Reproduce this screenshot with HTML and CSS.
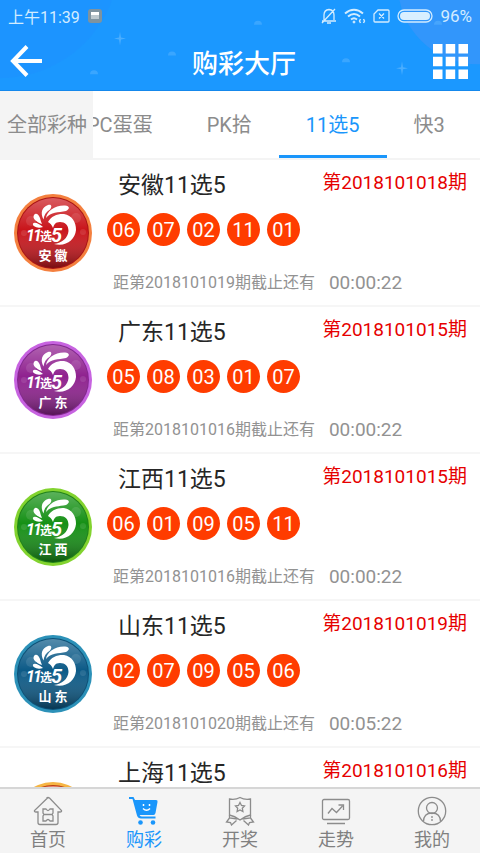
FILE: index.html
```html
<!DOCTYPE html>
<html lang="zh-CN">
<head>
    <meta charset="UTF-8">
    <meta name="viewport" content="width=device-width, initial-scale=1.0">
    <title>购彩大厅</title>
    <link rel="stylesheet" href="styles.css">
</head>
<body>
    <!-- shared badge artwork -->
    <svg class="defs" width="0" height="0" aria-hidden="true">
        <defs>
            <linearGradient id="shade" x1="0" y1="0" x2="0" y2="1">
                <stop offset="0" stop-color="#fff" stop-opacity=".3"/>
                <stop offset=".45" stop-color="#fff" stop-opacity="0"/>
                <stop offset="1" stop-color="#000" stop-opacity=".4"/>
            </linearGradient>
            <symbol id="badge" viewBox="0 0 78 78">
                <circle class="badge-ring" cx="39" cy="39" r="39"/>
                <circle class="badge-edge" cx="39" cy="39" r="36"/>
                <circle class="badge-face" cx="39" cy="39" r="35"/>
                <circle cx="39" cy="39" r="35" fill="url(#shade)"/>
                <g fill="#fff" opacity=".1">
                    <circle cx="17" cy="27" r="5"/>
                    <circle cx="62" cy="24" r="5"/>
                    <circle cx="10" cy="39" r="3"/>
                    <circle cx="69" cy="38" r="3"/>
                </g>
                <g fill="#fff">
                    <path d="M32 24C33 17 41 11 51 11.500C56 12 56 15 52 17C44 18.500 37 18 32 24Z"/>
                    <path d="M29.500 25.500C26 19 28 13 34 11C38 10 38 13 36 15.500C32 18 30 21 29.500 25.500Z"/>
                    <path d="M28 30C22 28 18 24 20 21C22 18 25 21 26 24C26.500 26 27 28 28 30Z"/>
                    <path d="M29 33C23 35 18 32 19 29.500C21 27.500 25 30 29 33Z"/>
                    <path d="M34 28C37 22 44 19.500 50 20C58 21.500 62 28 62 36C61 46 52 53 40 50C48 49 54 44 54.500 37C54.500 31 51 28 46 28C41 28 40 31 39 34C38 31 36 29 34 28Z"/>
                </g>
                <text class="badge-num" x="12 19" y="47">11</text>
                <text class="badge-pick" x="26" y="47">选</text>
                <text class="badge-five" x="37" y="48">5</text>
            </symbol>
        </defs>
    </svg>

    <div class="app">
        <header class="header">
            <svg class="header-decor" viewBox="0 0 480 91" preserveAspectRatio="none" aria-hidden="true">
                <circle cx="0" cy="-40" r="119" fill="#1e90ff" opacity=".45"/>
                <circle cx="478" cy="-15" r="80" fill="#4a94f8" opacity=".5"/>
                <path d="M120 32l1 6 5 1-5 1-1 6-1-6-5-1 5-1zM402 62l1 6 5 1-5 1-1 6-1-6-5-1 5-1z" fill="#6bbcff" opacity=".6"/>
                <path d="M90 75a4 4 0 0 1 8 0zM168 56a4 4 0 0 1 8 0zM254 25a4 4 0 0 1 8 0zM342 63a4 4 0 0 1 8 0zM434 25a4 4 0 0 1 8 0z" fill="#5ab4ff" opacity=".5"/>
            </svg>
            <div class="status">
                <span>上午11:39</span>
                <svg width="14" height="14" viewBox="0 0 14 14"><rect width="14" height="14" rx="3" fill="#7f939f"/><path d="M3 3h8v3H3z" fill="#fff"/><path d="M3 6h8v4H3z" fill="#bcc8ce"/></svg>
                <div class="status-right">
                    <svg width="16" height="16" viewBox="0 0 16 16" fill="none" stroke="#d3ecff" stroke-width="1.3"><path d="M3 12V7q0-5 5-5.500q5 .5 5 5.500v5M1 13h14M6 15h4M14 1L1 15"/></svg>
                    <svg width="22" height="16" viewBox="0 0 22 16" fill="none" stroke="#d3ecff" stroke-width="2"><path d="M1 5.500Q10-2 19 5.500M4 8.500q6-5 12 0M7 11.500q3-2.500 6 0"/><circle cx="10" cy="14" r="1" fill="#d3ecff" stroke-width="1"/><path d="M16.500 11l-1 2 1 2M19.500 11l1 2-1 2" stroke-width="1.400"/></svg>
                    <svg width="17" height="14" viewBox="0 0 17 14" fill="none" stroke="#d3ecff" stroke-width="1.300"><path d="M5 1h10q1 0 1 1v10q0 1-1 1H2q-1 0-1-1V5zM6 4.500l5 5M11 4.500l-5 5"/></svg>
                    <svg width="36" height="14" viewBox="0 0 36 14"><rect x="1" y="1" width="34" height="12" rx="6" fill="none" stroke="#d3ecff" stroke-width="1.300"/><rect x="3" y="3" width="30" height="8" rx="4" fill="#d9efff"/></svg>
                    <span>96%</span>
                </div>
            </div>
            <div class="navbar">
                <button class="back" type="button" aria-label="返回">
                    <svg width="32" height="32" viewBox="0 0 32 32" fill="none" stroke="#fff" stroke-width="4"><path d="M17 1.500L3 16l14 14.500M2 16h30"/></svg>
                </button>
                <h1>购彩大厅</h1>
                <button class="menu" type="button" aria-label="菜单">
                    <svg width="35" height="35" viewBox="0 0 35 35" fill="#fff"><path d="M0 0h9.500v9.500H0zM12.700 0h9.500v9.500h-9.500zM25.500 0H35v9.500h-9.500zM0 12.700h9.500v9.500H0zM12.700 12.700h9.500v9.500h-9.500zM25.500 12.700H35v9.500h-9.500zM0 25.500h9.500V35H0zM12.700 25.500h9.500V35h-9.500zM25.500 25.500H35V35h-9.500z"/></svg>
                </button>
            </div>
        </header>

        <nav class="tabs">
            <a class="tab-all" href="#">全部彩种</a>
            <div class="tab-scroll">
                <div class="tab-track">
                    <a class="tab" href="#">PC蛋蛋</a>
                    <a class="tab" href="#">PK拾</a>
                    <a class="tab active" href="#">11选5</a>
                    <a class="tab" href="#">快3</a>
                </div>
            </div>
        </nav>

        <main class="list">
            <section class="row">
                <svg class="badge red" width="78" height="78"><use href="#badge"/><text class="badge-name" x="39" y="66">安 徽</text></svg>
                <div class="info">
                    <div class="top"><h2>安徽11选5</h2><span class="issue">第2018101018期</span></div>
                    <div class="balls"><span>06</span><span>07</span><span>02</span><span>11</span><span>01</span></div>
                    <div class="deadline"><span>距第2018101019期截止还有</span><time>00:00:22</time></div>
                </div>
            </section>
            <section class="row">
                <svg class="badge purple" width="78" height="78"><use href="#badge"/><text class="badge-name" x="39" y="66">广 东</text></svg>
                <div class="info">
                    <div class="top"><h2>广东11选5</h2><span class="issue">第2018101015期</span></div>
                    <div class="balls"><span>05</span><span>08</span><span>03</span><span>01</span><span>07</span></div>
                    <div class="deadline"><span>距第2018101016期截止还有</span><time>00:00:22</time></div>
                </div>
            </section>
            <section class="row">
                <svg class="badge green" width="78" height="78"><use href="#badge"/><text class="badge-name" x="39" y="66">江 西</text></svg>
                <div class="info">
                    <div class="top"><h2>江西11选5</h2><span class="issue">第2018101015期</span></div>
                    <div class="balls"><span>06</span><span>01</span><span>09</span><span>05</span><span>11</span></div>
                    <div class="deadline"><span>距第2018101016期截止还有</span><time>00:00:22</time></div>
                </div>
            </section>
            <section class="row">
                <svg class="badge blue" width="78" height="78"><use href="#badge"/><text class="badge-name" x="39" y="66">山 东</text></svg>
                <div class="info">
                    <div class="top"><h2>山东11选5</h2><span class="issue">第2018101019期</span></div>
                    <div class="balls"><span>02</span><span>07</span><span>09</span><span>05</span><span>06</span></div>
                    <div class="deadline"><span>距第2018101020期截止还有</span><time>00:05:22</time></div>
                </div>
            </section>
            <section class="row">
                <svg class="badge orange" width="78" height="78"><use href="#badge"/></svg>
                <div class="info">
                    <div class="top"><h2>上海11选5</h2><span class="issue">第2018101016期</span></div>
                </div>
            </section>
        </main>

        <nav class="tabbar">
            <a href="#">
                <svg width="30" height="30" viewBox="0 0 30 30"><path d="M15 1.500L1.500 14.500q-.5 1.500 1.500 1.500h2v10.500q0 2 2 2h16q2 0 2-2V16h2q2 0 1.500-1.500L16.500 2q-1.500-1-3 0"/><path d="M10 13h3q2 3 4 0h3v4l-1 1.500 1 1.500v5h-3q-2-3-4 0h-3v-5l1-1.500-1-1.500zM11 18.500h8"/></svg>
                <span>首页</span>
            </a>
            <a class="active" href="#">
                <svg width="30" height="30" viewBox="0 0 30 30"><path d="M0 1h4.500l1.500 3h21q2 0 1.500 2l-2 11q-.5 2-2 2H10.500q1 1.500 2.500 1.500h13.500v2H12q-3 0-4-3L3.500 3H0z" fill="#1a96fb" stroke="none"/><circle cx="11.500" cy="26.500" r="2.300" fill="#1a96fb" stroke="none"/><circle cx="24" cy="26.500" r="2.300" fill="#1a96fb" stroke="none"/><path d="M14.500 8v2M20.500 8v2M14 12.500q3.500 3.500 7 0" stroke="#fff" stroke-width="1.500"/></svg>
                <span>购彩</span>
            </a>
            <a href="#">
                <svg width="30" height="30" viewBox="0 0 30 30"><path d="M4.500 3q6 1 10.500-1.500Q19.500 4 25.500 3v16q-5 1-10.500 5-5.500-4-10.500-5z"/><path d="M15 6.500l1.500 3 3 .5-2.200 2.200.6 3.300-2.900-1.600-2.900 1.600.6-3.300L10.500 10l3-.5zM4.500 22L1.500 26l4 .5 1 2.500 5-4.500M25.500 22l3 4-4 .5-1 2.500-5-4.500M4.500 19v3l8 1M25.500 19v3l-8 1"/></svg>
                <span>开奖</span>
            </a>
            <a href="#">
                <svg width="30" height="30" viewBox="0 0 30 30"><rect x="1.500" y="3.500" width="27" height="20" rx="1.500"/><path d="M7 17.500l4-5 4.500 4 6-6.500M17.500 9h5v5M6 27.500h18"/></svg>
                <span>走势</span>
            </a>
            <a href="#">
                <svg width="30" height="30" viewBox="0 0 30 30"><circle cx="15" cy="15" r="13.700"/><circle cx="15" cy="12" r="5.500"/><path d="M6.500 25.500q0-8.500 8.500-8.500t8.500 8.500M15 20v2M15 23v2"/></svg>
                <span>我的</span>
            </a>
        </nav>
    </div>
</body>
</html>
```
FILE: styles.css
```css
* {
    box-sizing: border-box;
}

body {
    font-family: Roboto, "Noto Sans CJK SC", sans-serif;
    margin: 0;
    background-color: #fff;
    color: #262626;
}

a {
    color: inherit;
    text-decoration: none;
}

h1, h2 {
    margin: 0;
    font-weight: 400;
}

button {
    padding: 0;
    border: 0;
    background: none;
    display: flex;
}

.defs {
    position: absolute;
}

.app {
    display: flex;
    flex-direction: column;
    height: 100vh;
    overflow: hidden;
}

/* header */
.header {
    position: relative;
    flex: none;
    background-color: #1b98ff;
    border-bottom: 1px solid #1588ec;
    color: #fff;
}

.header-decor {
    position: absolute;
    top: 0;
    left: 0;
    width: 100%;
    height: 100%;
}

.status {
    position: relative;
    display: flex;
    align-items: center;
    gap: 8px;
    height: 32px;
    padding: 0 8px;
    font-size: 16px;
    color: #d3ecff;
}

.status-right {
    display: flex;
    align-items: center;
    gap: 7px;
    margin-left: auto;
}

.status-right span {
    font-size: 17px;
}

.navbar {
    position: relative;
    display: flex;
    align-items: center;
    height: 58px;
    padding: 0 12px 0 10px;
}

.back {
    width: 45px;
}

.navbar h1 {
    flex: 1;
    text-align: center;
    font-size: 26px;
    font-weight: 500;
}

/* category tabs */
.tabs {
    flex: none;
    display: flex;
    height: 69px;
    border-bottom: 2px solid #f4f4f4;
    font-size: 20px;
    line-height: 68px;
    color: #8c8c8c;
    white-space: nowrap;
}

.tab-all {
    flex: none;
    padding: 0 6px 0 7px;
    background-color: #f4f4f4;
}

.tab-scroll {
    flex: 1;
    overflow: hidden;
}

/* strip is scrolled a little to the left */
.tab-track {
    display: flex;
    margin-left: -33px;
}

.tab {
    flex: none;
    height: 67px;
    padding: 0 27px;
}

.tab.active {
    color: #1a96fb;
    border-bottom: 3px solid #1a96fb;
}

/* lottery list */
.list {
    flex: 1;
    min-height: 0;
    overflow: hidden;
}

.row {
    display: flex;
    align-items: center;
    gap: 15px;
    height: 147px;
    padding: 0 13px 0 14px;
    border-bottom: 2px solid #f6f6f6;
}

.badge {
    flex: none;
}

.info {
    flex: 1;
    align-self: stretch;
    padding-top: 9px;
}

.top {
    display: flex;
    justify-content: space-between;
    padding-left: 11px;
}

.top h2 {
    font-size: 23px;
    line-height: 34px;
}

.issue {
    font-size: 19px;
    line-height: 28px;
    color: #e60000;
}

.balls {
    display: flex;
    gap: 7px;
    margin-top: 10px;
}

.balls span {
    width: 33px;
    height: 33px;
    border-radius: 50%;
    background-color: #ff3c00;
    color: #fff;
    font-size: 20px;
    line-height: 35px;
    text-align: center;
}

.deadline {
    display: flex;
    align-items: center;
    gap: 14px;
    margin-top: 22px;
    padding-left: 6px;
    font-size: 16px;
    line-height: 28px;
    color: #929292;
}

.deadline time {
    font-size: 19px;
    line-height: 30px;
}

/* badges */
.badge text, #badge text {
    fill: #fff;
    font-family: Roboto, "Noto Sans CJK SC", sans-serif;
    font-weight: 700;
}

.badge-name {
    font-size: 13px;
    text-anchor: middle;
}

.badge-num {
    font-size: 16px;
    font-style: italic;
}

.badge-pick {
    font-size: 12px;
}

.badge-five {
    font-size: 20px;
    font-style: italic;
}

.badge-ring {
    fill: var(--ring);
}

.badge-edge {
    fill: var(--edge);
}

.badge-face {
    fill: var(--face);
}

.red {
    --ring: #f4803f;
    --edge: #a81414;
    --face: #c9151b;
}

.purple {
    --ring: #c763e0;
    --edge: #83278f;
    --face: #8f218f;
}

.green {
    --ring: #82d32f;
    --edge: #20801a;
    --face: #159015;
}

.blue {
    --ring: #2c91b8;
    --edge: #0d5076;
    --face: #0c5a87;
}

.orange {
    --ring: #f6b544;
    --edge: #b83c14;
    --face: #e0583c;
}

/* bottom bar */
.tabbar {
    flex: none;
    display: flex;
    border-top: 2px solid #d6d6d6;
    background-color: #f4f4f4;
    color: #808080;
}

.tabbar a {
    flex: 1;
    display: flex;
    flex-direction: column;
    align-items: center;
    padding-top: 7px;
    font-size: 18px;
    line-height: 27px;
}

.tabbar svg {
    fill: none;
    stroke: #8c8c8c;
    stroke-width: 1.3px;
}

.tabbar .active {
    color: #1a96fb;
}
```
